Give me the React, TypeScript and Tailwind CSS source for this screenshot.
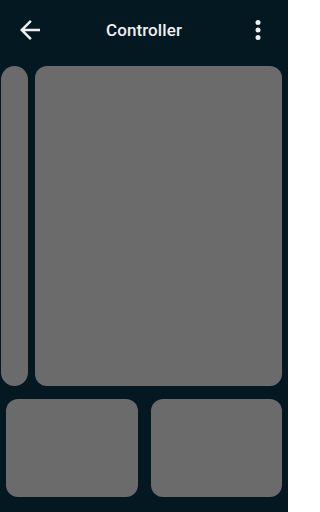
export default function App() {
  return (
    <div
      className="flex h-[512px] w-[288px] flex-col bg-[#031820] text-[#eef0f1]"
      style={{ fontFamily: "Roboto, 'Noto Sans', sans-serif" }}
    >
      {/* Top bar */}
      <header className="flex h-[60px] shrink-0 items-center justify-between px-[15px]">
        <button className="flex h-[30px] w-[30px] items-center justify-center">
          <svg viewBox="0 0 24 24" className="h-[30px] w-[30px]" fill="currentColor">
            <path d="M20 11H7.83l5.59-5.59L12 4l-8 8 8 8 1.41-1.41L7.83 13H20v-2z" />
          </svg>
        </button>
        <h1 className="pt-px text-[17px] font-medium tracking-[0.1px]">Controller</h1>
        <button className="flex h-[30px] w-[30px] items-center justify-center">
          <svg viewBox="0 0 24 24" className="h-[30px] w-[30px]" fill="currentColor">
            <circle cx="12" cy="6" r="2" />
            <circle cx="12" cy="12" r="2" />
            <circle cx="12" cy="18" r="2" />
          </svg>
        </button>
      </header>

      {/* Main area */}
      <div className="mt-[6px] flex h-[320px] gap-[7px] pl-px pr-[6px]">
        <div className="w-[27px] rounded-full bg-[#6b6b6b]" />
        <div className="flex-1 rounded-[12px] bg-[#6b6b6b]" />
      </div>

      {/* Bottom buttons */}
      <div className="mt-[13px] flex h-[98px] gap-[13px] px-[6px]">
        <div className="flex-1 rounded-[12px] bg-[#6b6b6b]" />
        <div className="flex-1 rounded-[12px] bg-[#6b6b6b]" />
      </div>
    </div>
  );
}
